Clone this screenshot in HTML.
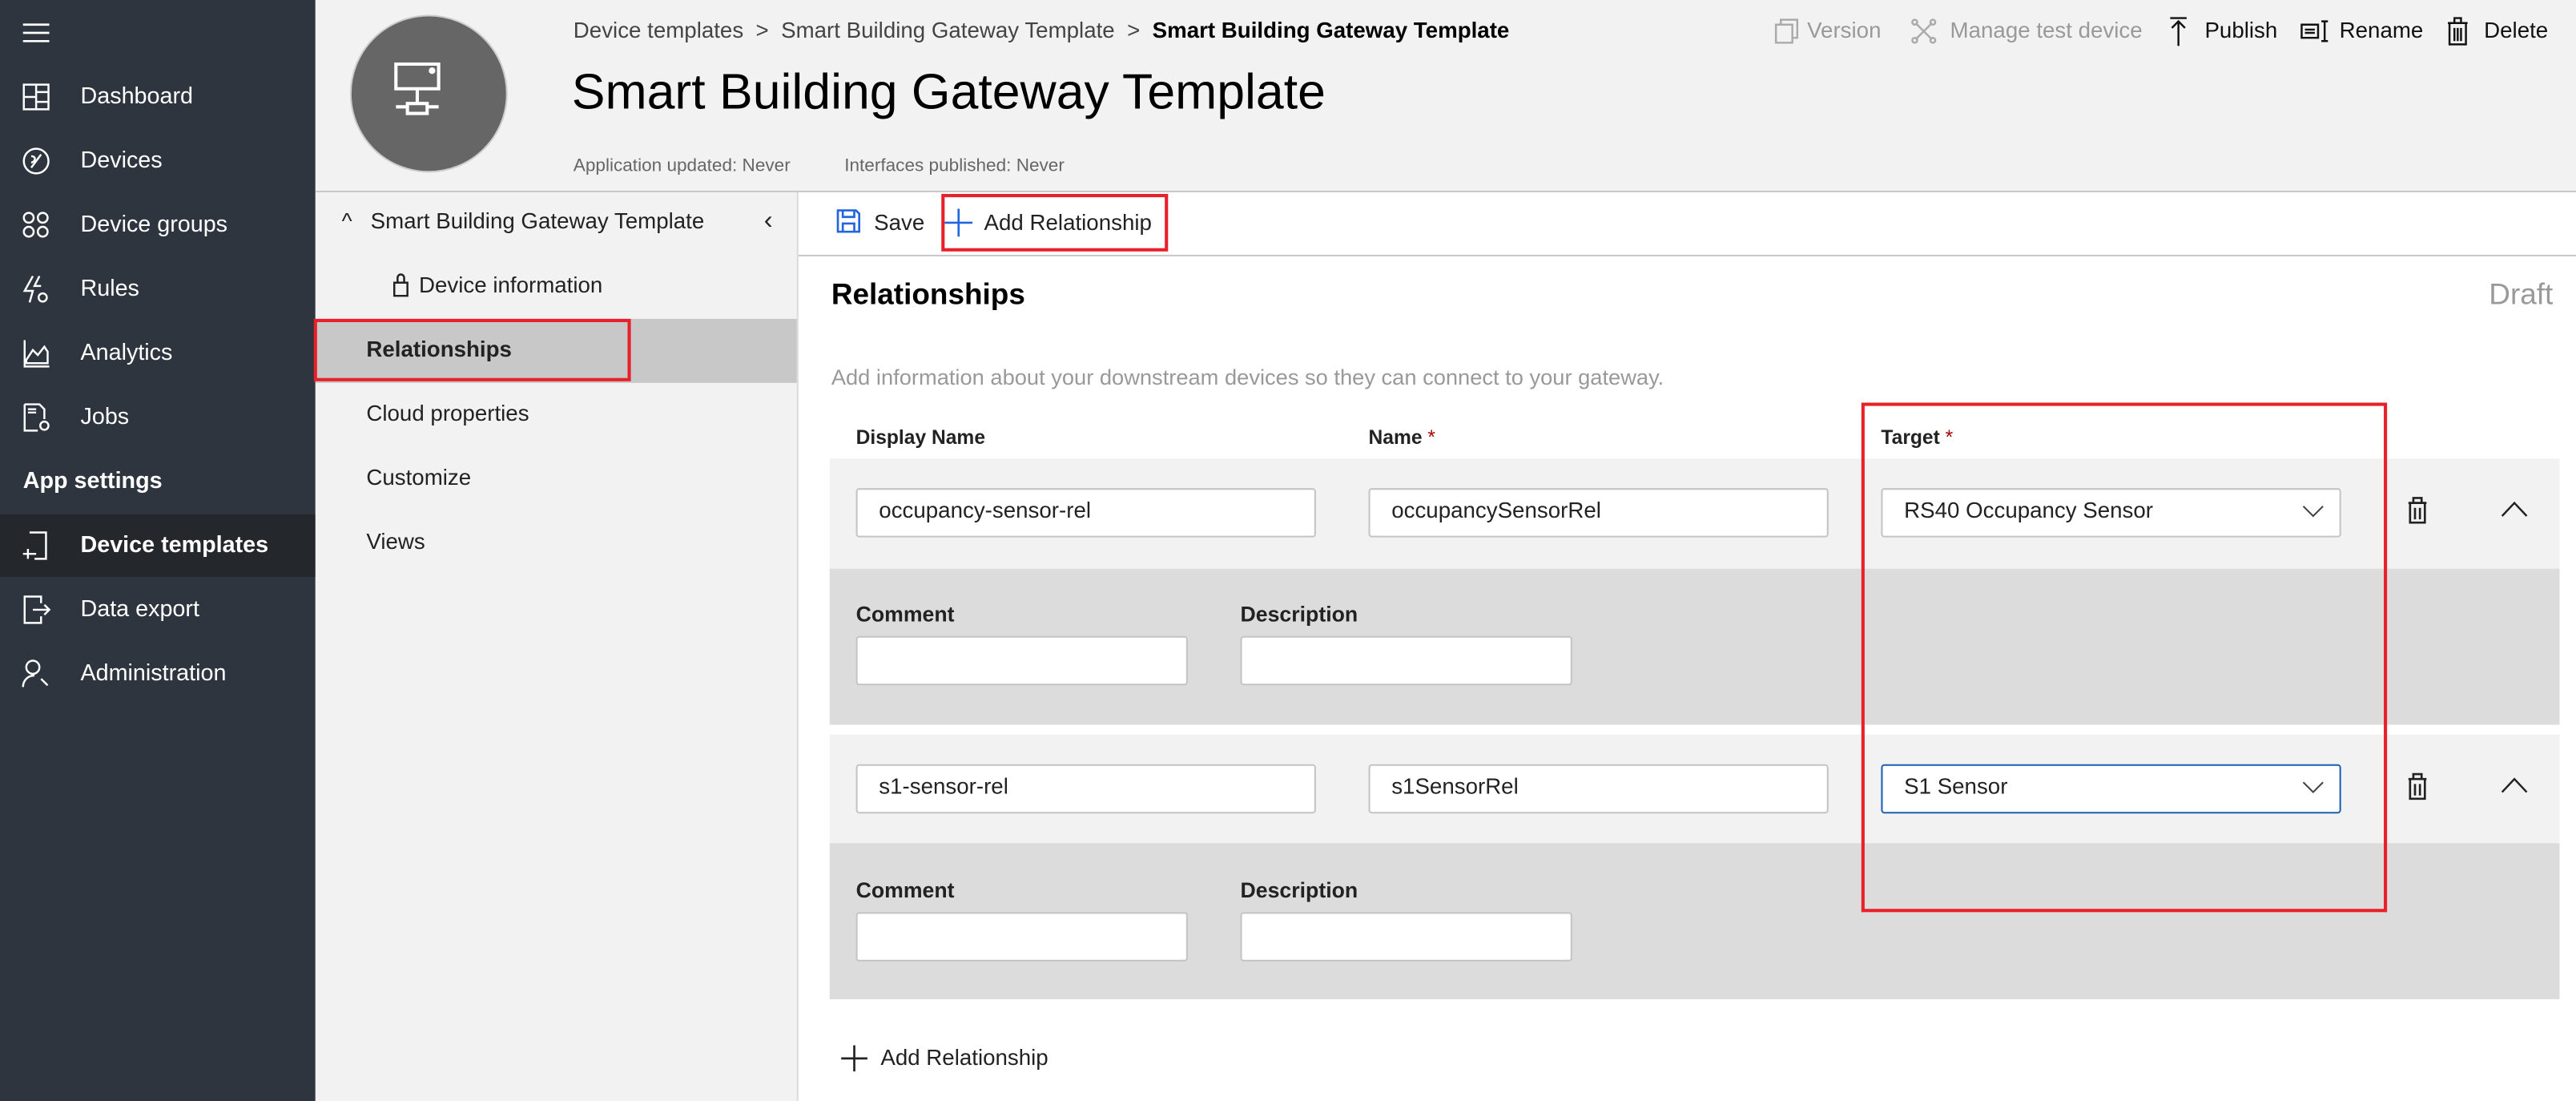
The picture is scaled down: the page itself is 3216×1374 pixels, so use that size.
<!DOCTYPE html>
<html><head><meta charset="utf-8"><style>
html,body{margin:0;padding:0;width:3216px;height:1374px;overflow:hidden;background:#fff}
#w{position:absolute;left:0;top:0;width:1568px;height:670px;transform:scale(2.05102);transform-origin:0 0;font-family:"Liberation Sans",sans-serif;color:#000}
.a{position:absolute}
.sb{left:0;top:0;width:192px;height:670px;background:#2f353e}
.si{position:absolute;left:49px;font-size:14px;color:#fff;white-space:nowrap}
.ic{position:absolute;left:13px}
.hd{left:192px;top:0;width:1376px;height:116px;background:#f2f2f2;border-bottom:1px solid #c8c8c8}
.nav{left:192px;top:117px;width:293px;height:553px;background:#f2f2f2;border-right:1px solid #ddd}
.ni{position:absolute;left:31px;font-size:13.5px;color:#222;white-space:nowrap}
.t{font-size:13px;color:#222;white-space:nowrap;position:absolute}
.tb{position:absolute;top:11px;font-size:13.5px;white-space:nowrap}
.inp{position:absolute;background:#fff;border:1px solid #c4c4c4;border-radius:2px;height:28px;box-sizing:border-box;font-size:13.5px;line-height:26px;padding-left:13px;color:#222}
.lbl{position:absolute;font-size:12px;font-weight:bold;color:#222}
.red{position:absolute;border:2px solid #e8202a;box-sizing:border-box}
</style></head><body><div id="w">
<div class="a sb">
 <svg class="ic" style="top:13px" width="18" height="14"><path d="M1 2h16M1 7h16M1 12h16" stroke="#fff" stroke-width="1.3"/></svg>
 <svg class="ic" style="top:50px" width="18" height="18" fill="none" stroke="#fff" stroke-width="1.2"><path d="M1.5 1.5h15v15h-15zM9 1.5v15M1.5 9h7.5M9 6h7.5M9 12h7.5"/></svg><div class="si" style="top:50px">Dashboard</div>
 <svg class="ic" style="top:89px" width="18" height="18" fill="none" stroke="#fff" stroke-width="1.2"><circle cx="9" cy="9" r="7.5"/><path d="M6 13l6-8M6 6c3 0 3 3 0 4"/></svg><div class="si" style="top:89px">Devices</div>
 <svg class="ic" style="top:128px" width="18" height="18" fill="none" stroke="#fff" stroke-width="1.2"><circle cx="4.5" cy="4.5" r="3"/><circle cx="13" cy="4.5" r="3"/><circle cx="4.5" cy="13" r="3"/><circle cx="13" cy="13" r="3"/></svg><div class="si" style="top:128px">Device groups</div>
 <svg class="ic" style="top:167px" width="18" height="18" fill="none" stroke="#fff" stroke-width="1.2"><path d="M7 1L2 10h5l-2 7M11 1l-3 6h4"/><circle cx="13" cy="14" r="2.5"/></svg><div class="si" style="top:167px">Rules</div>
 <svg class="ic" style="top:206px" width="18" height="18" fill="none" stroke="#fff" stroke-width="1.2"><path d="M2 1v16h15M3 13l4-6 3 3 4-5 2 3v7H3z"/></svg><div class="si" style="top:206px">Analytics</div>
 <svg class="ic" style="top:245px" width="18" height="18" fill="none" stroke="#fff" stroke-width="1.2"><path d="M2 1h9l3 3v6M2 1v16h8M4 4h5M4 6h5"/><circle cx="14" cy="14" r="2.5"/></svg><div class="si" style="top:245px">Jobs</div>
 <div class="si" style="left:14px;top:284px;font-weight:bold">App settings</div>
 <div class="a" style="left:0;top:313px;width:192px;height:38px;background:#24272b"></div>
 <svg class="ic" style="top:323px" width="18" height="18" fill="none" stroke="#fff" stroke-width="1.2"><path d="M5 1h10v16H8M1 14h8M4 11v6"/></svg><div class="si" style="top:323px;font-weight:bold">Device templates</div>
 <svg class="ic" style="top:362px" width="18" height="18" fill="none" stroke="#fff" stroke-width="1.2"><path d="M12 5V1H2v16h10v-4M7 9h10M14 6l3 3-3 3"/></svg><div class="si" style="top:362px">Data export</div>
 <svg class="ic" style="top:401px" width="18" height="18" fill="none" stroke="#fff" stroke-width="1.2"><circle cx="7" cy="5" r="4"/><path d="M1 17c0-4 3-7 7-7M12 12l4 4"/></svg><div class="si" style="top:401px">Administration</div>
</div>
<div class="a hd">
 <div class="a" style="left:21px;top:9px;width:96px;height:96px;border-radius:50%;background:#666;border:1px solid #ccc;box-sizing:border-box"></div>
 <svg class="a" style="left:45px;top:33px" width="48" height="48" fill="none" stroke="#fff" stroke-width="2"><path d="M4 6h26v15H4zM17 21v8M11 30h12v6H11zM4 32h7M23 32h7"/><circle cx="26" cy="10" r="1" fill="#fff"/></svg>
 <div class="a" style="left:157px;top:11px;font-size:13.5px;color:#444;white-space:nowrap">Device templates &nbsp;&gt;&nbsp; Smart Building Gateway Template &nbsp;&gt;&nbsp; <span style="color:#000;font-weight:bold">Smart Building Gateway Template</span></div>
 <div class="a" style="left:156px;top:39px;font-size:30.5px;white-space:nowrap">Smart Building Gateway Template</div>
 <div class="a" style="left:157px;top:95px;font-size:11px;color:#666;white-space:nowrap">Application updated: Never</div>
 <div class="a" style="left:322px;top:95px;font-size:11px;color:#666;white-space:nowrap">Interfaces published: Never</div>
 <svg class="a" style="left:888px;top:11px" width="15" height="16" fill="none" stroke="#aaa" stroke-width="1.2"><path d="M1 4h10v11H1zM4 4V1h10v11h-3"/></svg>
 <div class="tb" style="left:908px;color:#999">Version</div>
 <svg class="a" style="left:971px;top:11px" width="16" height="16" fill="none" stroke="#aaa" stroke-width="1.2"><path d="M3 3l10 10M13 3L3 13"/><circle cx="2.5" cy="2.5" r="1.5"/><circle cx="13.5" cy="2.5" r="1.5"/><circle cx="2.5" cy="13.5" r="1.5"/><circle cx="13.5" cy="13.5" r="1.5"/></svg>
 <div class="tb" style="left:995px;color:#999">Manage test device</div>
 <svg class="a" style="left:1128px;top:10px" width="12" height="18" fill="none" stroke="#111" stroke-width="1.2"><path d="M1 1h10M6 3v15M2 7l4-4 4 4"/></svg>
 <div class="tb" style="left:1150px;color:#111">Publish</div>
 <svg class="a" style="left:1208px;top:12px" width="18" height="14" fill="none" stroke="#111" stroke-width="1.2"><path d="M1 3h10v8H1zM3 6h6M3 8h6M13 1h4M15 1v12M13 13h4"/></svg>
 <div class="tb" style="left:1232px;color:#111">Rename</div>
 <svg class="a" style="left:1297px;top:10px" width="14" height="18" fill="none" stroke="#111" stroke-width="1.2"><path d="M1 4h12M5 4V1h4v3M2 4v13h10V4M5 7v8M7 7v8M9 7v8"/></svg>
 <div class="tb" style="left:1320px;color:#111">Delete</div>
</div>
<div class="a nav">
 <div class="ni" style="left:16px;top:10px">^&nbsp;&nbsp;&nbsp;Smart Building Gateway Template</div>
 <div class="ni" style="left:273px;top:9px;font-size:16px">‹</div>
 <svg class="a" style="left:46px;top:48px" width="12" height="16" fill="none" stroke="#222" stroke-width="1.2"><path d="M2 7h8v8H2zM4 7V4a2 2 0 0 1 4 0v3"/></svg>
 <div class="ni" style="left:63px;top:49px">Device information</div>
 <div class="a" style="left:0;top:77px;width:293px;height:39px;background:#c8c8c8"></div>
 <div class="ni" style="top:88px;font-weight:bold">Relationships</div>
 <div class="ni" style="top:127px">Cloud properties</div>
 <div class="ni" style="top:166px">Customize</div>
 <div class="ni" style="top:205px">Views</div>
</div>
<div class="red" style="left:191px;top:194px;width:193px;height:38px"></div>
<div class="a" style="left:486px;top:155px;width:1082px;height:1px;background:#c8c8c8"></div>
<svg class="a" style="left:509px;top:127px" width="15" height="15" fill="none" stroke="#2266dd" stroke-width="1.3"><path d="M1 1h11l2 2v11H1zM4 1v4h7V1M4 14V9h7v5"/></svg>
<div class="t" style="left:532px;top:128px;font-size:13.5px">Save</div>
<svg class="a" style="left:575px;top:127px" width="17" height="17"><path d="M8.5 0v17M0 8.5h17" stroke="#2266dd" stroke-width="1.3"/></svg>
<div class="t" style="left:599px;top:128px;font-size:13.5px">Add Relationship</div>
<div class="red" style="left:573px;top:118px;width:138px;height:35px"></div>
<div class="a" style="left:506px;top:169px;font-size:18px;font-weight:bold">Relationships</div>
<div class="a" style="left:1515px;top:169px;font-size:18px;color:#999">Draft</div>
<div class="a" style="left:506px;top:222px;font-size:13.3px;color:#999;white-space:nowrap">Add information about your downstream devices so they can connect to your gateway.</div>
<div class="lbl" style="left:521px;top:259px">Display Name</div>
<div class="lbl" style="left:833px;top:259px">Name <span style="color:#a00;font-weight:normal">*</span></div>
<div class="lbl" style="left:1145px;top:259px">Target <span style="color:#a00;font-weight:normal">*</span></div>

<div class="a" style="left:505px;top:279px;width:1053px;height:67px;background:#f2f2f2"></div>
<div class="a" style="left:505px;top:346px;width:1053px;height:95px;background:#dcdcdc"></div>
<div class="inp" style="left:521px;top:297px;width:280px;height:30px">occupancy-sensor-rel</div>
<div class="inp" style="left:833px;top:297px;width:280px;height:30px">occupancySensorRel</div>
<div class="inp" style="left:1145px;top:297px;width:280px;height:30px">RS40 Occupancy Sensor</div>
<svg class="a" style="left:1401px;top:306px" width="14" height="10" fill="none" stroke="#444"><path d="M1 2l6 6 6-6"/></svg>
<svg class="a" style="left:1465px;top:302px" width="13" height="17" fill="none" stroke="#222" stroke-width="1.3"><path d="M1 4h11M4 4V1h5v3M2 4v12h9V4M5 7v7M8 7v7"/></svg>
<svg class="a" style="left:1522px;top:304px" width="17" height="11" fill="none" stroke="#222" stroke-width="1.2"><path d="M1 10l7.5-8 7.5 8"/></svg>
<div class="lbl" style="left:521px;top:366px;font-size:13px">Comment</div>
<div class="lbl" style="left:755px;top:366px;font-size:13px">Description</div>
<div class="inp" style="left:521px;top:387px;width:202px;height:30px"></div>
<div class="inp" style="left:755px;top:387px;width:202px;height:30px"></div>

<div class="a" style="left:505px;top:447px;width:1053px;height:66px;background:#f2f2f2"></div>
<div class="a" style="left:505px;top:513px;width:1053px;height:95px;background:#dcdcdc"></div>
<div class="inp" style="left:521px;top:465px;width:280px;height:30px">s1-sensor-rel</div>
<div class="inp" style="left:833px;top:465px;width:280px;height:30px">s1SensorRel</div>
<div class="inp" style="left:1145px;top:465px;width:280px;height:30px;border-color:#1a5fb4">S1 Sensor</div>
<svg class="a" style="left:1401px;top:474px" width="14" height="10" fill="none" stroke="#444"><path d="M1 2l6 6 6-6"/></svg>
<svg class="a" style="left:1465px;top:470px" width="13" height="17" fill="none" stroke="#222" stroke-width="1.3"><path d="M1 4h11M4 4V1h5v3M2 4v12h9V4M5 7v7M8 7v7"/></svg>
<svg class="a" style="left:1522px;top:472px" width="17" height="11" fill="none" stroke="#222" stroke-width="1.2"><path d="M1 10l7.5-8 7.5 8"/></svg>
<div class="lbl" style="left:521px;top:534px;font-size:13px">Comment</div>
<div class="lbl" style="left:755px;top:534px;font-size:13px">Description</div>
<div class="inp" style="left:521px;top:555px;width:202px;height:30px"></div>
<div class="inp" style="left:755px;top:555px;width:202px;height:30px"></div>

<div class="red" style="left:1133px;top:245px;width:320px;height:310px"></div>
<svg class="a" style="left:512px;top:636px" width="16" height="16"><path d="M8 0v16M0 8h16" stroke="#222" stroke-width="1.3"/></svg>
<div class="t" style="left:536px;top:636px;font-size:13.5px">Add Relationship</div>
</div></body></html>
